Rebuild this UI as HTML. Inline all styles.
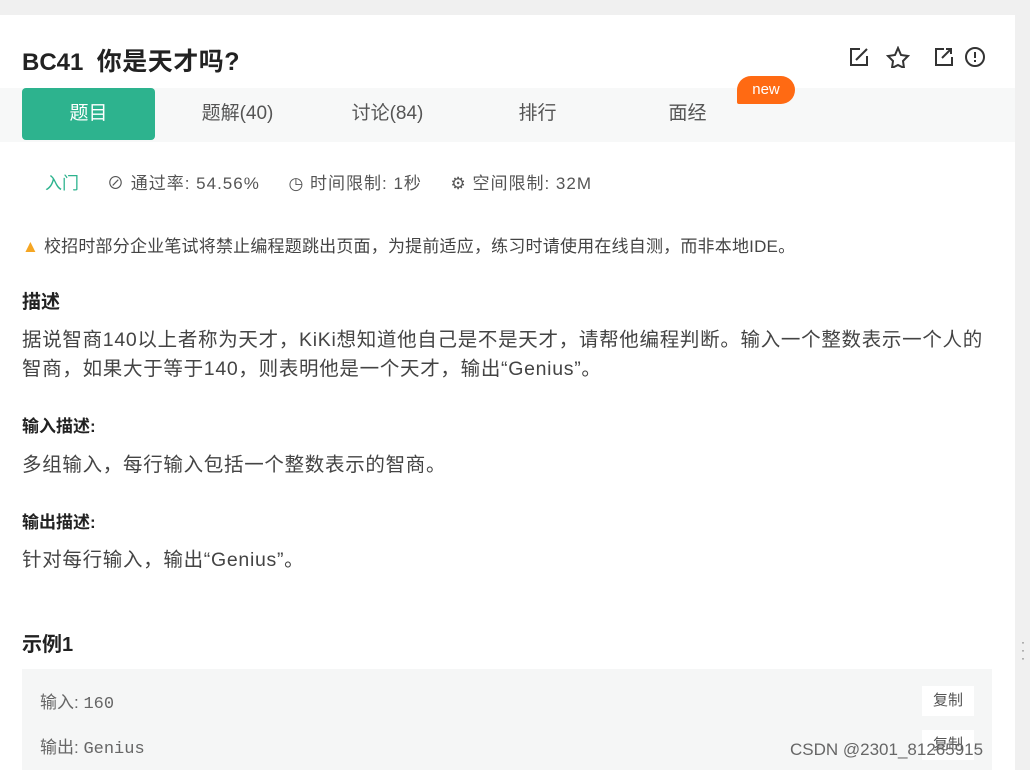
<!DOCTYPE html>
<html><head><meta charset="utf-8"><style>
body{margin:0;width:1030px;height:770px;overflow:hidden;background:#f0f0f0;font-family:"Liberation Sans","Noto Sans CJK SC",sans-serif;color:#333;position:relative}
.card{position:absolute;left:0;top:15px;width:1015px;height:755px;background:#fff}
.abs{position:absolute;white-space:nowrap}
.tabbar{position:absolute;left:0;top:88px;width:1015px;height:54px;background:#f7f8f8}
.tab{position:absolute;top:88px;height:52px;line-height:52px;font-size:19px;color:#555;text-align:center}
h3{margin:0;font-size:19px;font-weight:bold;color:#222}
.p{font-size:19.5px;color:#444;line-height:29px;letter-spacing:0.7px}
</style></head><body>
<div class="card"></div>
<div class="abs" style="left:22px;top:42px;font-size:24px;font-weight:bold;color:#222">BC41&nbsp; <span style="font-size:25px;letter-spacing:0.5px">你是天才吗?</span></div>
<svg class="abs" style="left:848px;top:46px" width="145" height="22" fill="none" stroke="#333" stroke-width="2">
<path d="M12 3H3v16h16v-9"/><path d="M8 14l11-11"/>
<path d="M50 2l3 7 7 1-5 5 1 7-6-3-6 3 1-7-5-5 7-1z"/>
<path d="M96 3H88v16h16v-8"/><path d="M94 12l8-8M98 3h5v5"/>
<circle cx="127" cy="11" r="9"/><path d="M127 6v6M127 14v2"/>
</svg>
<div class="tabbar"></div>
<div class="tab" style="left:22px;width:133px;background:#2db38e;color:#fff;border-radius:4px">题目</div>
<div class="tab" style="left:180px;width:115px">题解(40)</div>
<div class="tab" style="left:330px;width:115px">讨论(84)</div>
<div class="tab" style="left:480px;width:115px">排行</div>
<div class="tab" style="left:630px;width:115px">面经</div>
<div class="abs" style="left:737px;top:76px;width:58px;height:28px;background:#ff6a13;color:#fff;border-radius:14px 14px 14px 2px;font-size:15px;text-align:center;line-height:28px">new</div>
<div class="abs" style="left:45px;top:169px;font-size:17px;color:#2db38e">入门</div>
<div class="abs" style="left:107px;top:169px;font-size:17px;color:#555;letter-spacing:1px">⊘ 通过率: 54.56%&nbsp;&nbsp;&nbsp;&nbsp; ◷ 时间限制: 1秒&nbsp;&nbsp;&nbsp;&nbsp; ⚙ 空间限制: 32M</div>
<div class="abs" style="left:22px;top:232px;font-size:17px;color:#444;letter-spacing:0.2px"><span style="color:#f5a623">▲</span> 校招时部分企业笔试将禁止编程题跳出页面，为提前适应，练习时请使用在线自测，而非本地IDE。</div>
<h3 class="abs" style="left:22px;top:287px">描述</h3>
<div class="abs p" style="left:22px;top:326px">据说智商140以上者称为天才，KiKi想知道他自己是不是天才，请帮他编程判断。输入一个整数表示一个人的<br>智商，如果大于等于140，则表明他是一个天才，输出“Genius”。</div>
<h3 class="abs" style="left:22px;top:412px;font-size:17px">输入描述:</h3>
<div class="abs p" style="left:22px;top:451px">多组输入，每行输入包括一个整数表示的智商。</div>
<h3 class="abs" style="left:22px;top:508px;font-size:17px">输出描述:</h3>
<div class="abs p" style="left:22px;top:546px">针对每行输入，输出“Genius”。</div>
<h3 class="abs" style="left:22px;top:628px;font-size:20px">示例1</h3>
<div class="abs" style="left:22px;top:669px;width:970px;height:101px;background:#f5f6f6"></div>
<div class="abs" style="left:40px;top:688px;font-size:17px;color:#666">输入: <span style="font-family:'Liberation Mono',monospace">160</span></div>
<div class="abs" style="left:40px;top:733px;font-size:17px;color:#666">输出: <span style="font-family:'Liberation Mono',monospace">Genius</span></div>
<div class="abs" style="left:922px;top:686px;width:52px;height:30px;background:#fff;font-size:15px;line-height:30px;text-align:center;color:#555">复制</div>
<div class="abs" style="left:922px;top:730px;width:52px;height:30px;background:#fff;font-size:15px;line-height:30px;text-align:center;color:#555">复制</div>
<div class="abs" style="left:790px;top:740px;font-size:17px;color:#666">CSDN @2301_81265915</div>
<div class="abs" style="left:1021px;top:638px;font-size:12px;line-height:8px;color:#666">·<br>·<br>·</div>
</body></html>
